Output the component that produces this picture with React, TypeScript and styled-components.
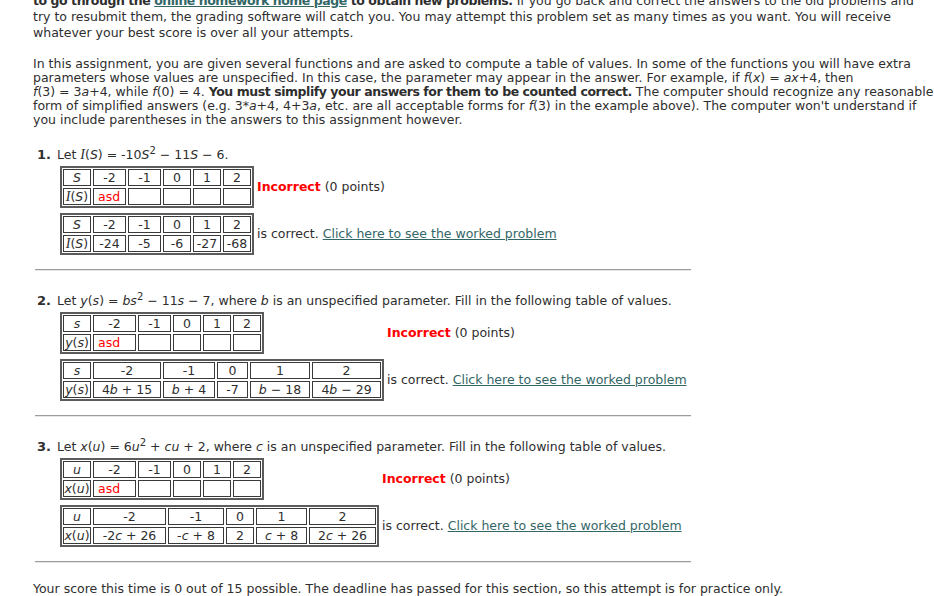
import React from 'react';
import styled, { createGlobalStyle } from 'styled-components';

const GlobalStyle = createGlobalStyle`
  html, body {
    margin: 0;
    padding: 0;
    background: #ffffff;
  }
`;

const Page = styled.div`
  padding: 0 4px 0 33px;
  font-family: 'DejaVu Sans', Verdana, sans-serif;
  font-size: 12.5px;
  color: #2e2e2e;
  overflow: hidden;
  height: 596px;
  box-sizing: border-box;
`;

const Paragraph = styled.div<{ $lineHeight: number; $top: number }>`
  margin-top: ${(p) => p.$top}px;
  line-height: ${(p) => p.$lineHeight}px;
  white-space: nowrap;
`;

const Line = styled.span`
  display: block;
`;

const Strong = styled.b`
  letter-spacing: -0.45px;
`;

const Link = styled.a<{ $bold?: boolean }>`
  color: #336666;
  text-decoration: underline;
  font-weight: ${(p) => (p.$bold ? 700 : 400)};
  cursor: pointer;
`;

const Var = styled.i`
  font-style: italic;
`;

const SerifVar = styled.i`
  font-family: 'Liberation Serif', 'Times New Roman', serif;
  font-style: italic;
  font-size: 14px;
`;

const Sup = styled.sup`
  font-size: 10px;
  line-height: 0;
  vertical-align: 5px;
`;

const Problem = styled.section<{ $top: number }>`
  display: grid;
  grid-template-columns: 20px max-content;
  padding-left: 4px;
  margin-top: ${(p) => p.$top}px;
`;

const Number = styled.div`
  font-weight: 700;
  font-size: 13px;
  line-height: 14px;
`;

const Statement = styled.div`
  line-height: 14px;
  white-space: nowrap;
`;

const Answers = styled.div`
  display: grid;
  grid-template-columns: max-content max-content;
  column-gap: 3px;
  row-gap: 5px;
  align-items: center;
  margin: 4px 0 0 3px;
`;

const ValueGrid = styled.div<{ $cols: number[] }>`
  display: grid;
  grid-template-columns: ${(p) => p.$cols.map((c) => `${c}px`).join(' ')};
  gap: 2px;
  padding: 1px;
  border: 2px solid #5c5c5c;
  width: max-content;
`;

const Cell = styled.div<{ $wrong?: boolean }>`
  box-sizing: border-box;
  height: 17px;
  border: 1px solid #3a3a3a;
  text-align: center;
  white-space: nowrap;
  line-height: 15px;
  overflow: hidden;
  color: ${(p) => (p.$wrong ? '#ff0000' : 'inherit')};
`;

const InputCell = styled(Cell)`
  text-align: left;
  padding-left: 4px;
`;

const Message = styled.div`
  white-space: nowrap;
  line-height: 14px;
`;

const Incorrect = styled.b`
  color: #ff0000;
`;

const Rule = styled.hr<{ $top: number }>`
  width: 656px;
  margin: ${(p) => p.$top}px 0 0 2px;
  border: 0;
  border-top: 1px solid #9c9c9c;
  border-bottom: 1px solid #e6e6e6;
  height: 0;
`;

const Score = styled.div`
  margin-top: 19px;
  line-height: 14px;
  white-space: nowrap;
`;

type ProblemData = {
  n: number;
  statement: React.ReactNode;
  varLabel: React.ReactNode;
  fnLabel: React.ReactNode;
  inputCols: number[];
  answerCols: number[];
  answers: React.ReactNode[];
};

const xs = ['-2', '-1', '0', '1', '2'];

const problems: ProblemData[] = [
  {
    n: 1,
    statement: (
      <>
        Let <SerifVar>I</SerifVar>(<Var>S</Var>) = -10<Var>S</Var>
        <Sup>2</Sup> − 11<Var>S</Var> − 6.
      </>
    ),
    varLabel: <Var>S</Var>,
    fnLabel: (
      <>
        <SerifVar>I</SerifVar>(<Var>S</Var>)
      </>
    ),
    inputCols: [28, 33, 33, 28, 28, 28],
    answerCols: [28, 33, 33, 28, 28, 28],
    answers: ['-24', '-5', '-6', '-27', '-68'],
  },
  {
    n: 2,
    statement: (
      <>
        Let <Var>y</Var>(<Var>s</Var>) = <Var>bs</Var>
        <Sup>2</Sup> − 11<Var>s</Var> − 7, where <Var>b</Var> is an unspecified
        parameter. Fill in the following table of values.
      </>
    ),
    varLabel: <Var>s</Var>,
    fnLabel: (
      <>
        <Var>y</Var>(<Var>s</Var>)
      </>
    ),
    inputCols: [28, 43, 33, 28, 28, 28],
    answerCols: [28, 68, 52, 31, 60, 69],
    answers: [
      <>
        4<Var>b</Var> + 15
      </>,
      <>
        <Var>b</Var> + 4
      </>,
      '-7',
      <>
        <Var>b</Var> − 18
      </>,
      <>
        4<Var>b</Var> − 29
      </>,
    ],
  },
  {
    n: 3,
    statement: (
      <>
        Let <Var>x</Var>(<Var>u</Var>) = 6<Var>u</Var>
        <Sup>2</Sup> + <Var>cu</Var> + 2, where <Var>c</Var> is an unspecified
        parameter. Fill in the following table of values.
      </>
    ),
    varLabel: <Var>u</Var>,
    fnLabel: (
      <>
        <Var>x</Var>(<Var>u</Var>)
      </>
    ),
    inputCols: [28, 43, 33, 28, 28, 28],
    answerCols: [28, 73, 56, 28, 51, 67],
    answers: [
      <>
        -2<Var>c</Var> + 26
      </>,
      <>
        -<Var>c</Var> + 8
      </>,
      '2',
      <>
        <Var>c</Var> + 8
      </>,
      <>
        2<Var>c</Var> + 26
      </>,
    ],
  },
];

const ProblemBlock = ({ p, top }: { p: ProblemData; top: number }) => (
  <Problem $top={top}>
    <Number>{p.n}.</Number>
    <div>
      <Statement>{p.statement}</Statement>
      <Answers>
        <ValueGrid $cols={p.inputCols}>
          <Cell>{p.varLabel}</Cell>
          {xs.map((x) => (
            <Cell key={x}>{x}</Cell>
          ))}
          <Cell>{p.fnLabel}</Cell>
          <InputCell $wrong>asd</InputCell>
          {xs.slice(1).map((x) => (
            <Cell key={x} />
          ))}
        </ValueGrid>
        <Message>
          <Incorrect>Incorrect</Incorrect> (0 points)
        </Message>
        <ValueGrid $cols={p.answerCols}>
          <Cell>{p.varLabel}</Cell>
          {xs.map((x) => (
            <Cell key={x}>{x}</Cell>
          ))}
          <Cell>{p.fnLabel}</Cell>
          {p.answers.map((a, i) => (
            <Cell key={i}>{a}</Cell>
          ))}
        </ValueGrid>
        <Message>
          is correct. <Link>Click here to see the worked problem</Link>
        </Message>
      </Answers>
    </div>
  </Problem>
);

export default function App() {
  return (
    <>
      <GlobalStyle />
      <Page>
        <Paragraph $top={-7} $lineHeight={16}>
          <Line>
            <Strong>
              to go through the <Link $bold>online homework home page</Link> to
              obtain new problems.
            </Strong>{' '}
            If you go back and correct the answers to the old problems and
          </Line>
          <Line>
            try to resubmit them, the grading software will catch you. You may
            attempt this problem set as many times as you want. You will receive
          </Line>
          <Line>whatever your best score is over all your attempts.</Line>
        </Paragraph>
        <Paragraph $top={16} $lineHeight={14}>
          <Line>
            In this assignment, you are given several functions and are asked to
            compute a table of values. In some of the functions you will have extra
          </Line>
          <Line>
            parameters whose values are unspecified. In this case, the parameter
            may appear in the answer. For example, if <Var>f</Var>(<Var>x</Var>) ={' '}
            <Var>a</Var>
            <Var>x</Var>+4, then
          </Line>
          <Line>
            <Var>f</Var>(3) = 3<Var>a</Var>+4, while <Var>f</Var>(0) = 4.{' '}
            <Strong>You must simplify your answers for them to be counted correct.</Strong>{' '}
            The computer should recognize any reasonable
          </Line>
          <Line>
            form of simplified answers (e.g. 3*<Var>a</Var>+4, 4+3<Var>a</Var>, etc.
            are all acceptable forms for <Var>f</Var>(3) in the example above). The
            computer won't understand if
          </Line>
          <Line>
            you include parentheses in the answers to this assignment however.
          </Line>
        </Paragraph>
        {problems.map((p, i) => (
          <React.Fragment key={p.n}>
            <ProblemBlock p={p} top={i === 0 ? 21 : 23} />
            <Rule $top={14} />
          </React.Fragment>
        ))}
        <Score>
          Your score this time is 0 out of 15 possible. The deadline has passed for
          this section, so this attempt is for practice only.
        </Score>
      </Page>
    </>
  );
}
